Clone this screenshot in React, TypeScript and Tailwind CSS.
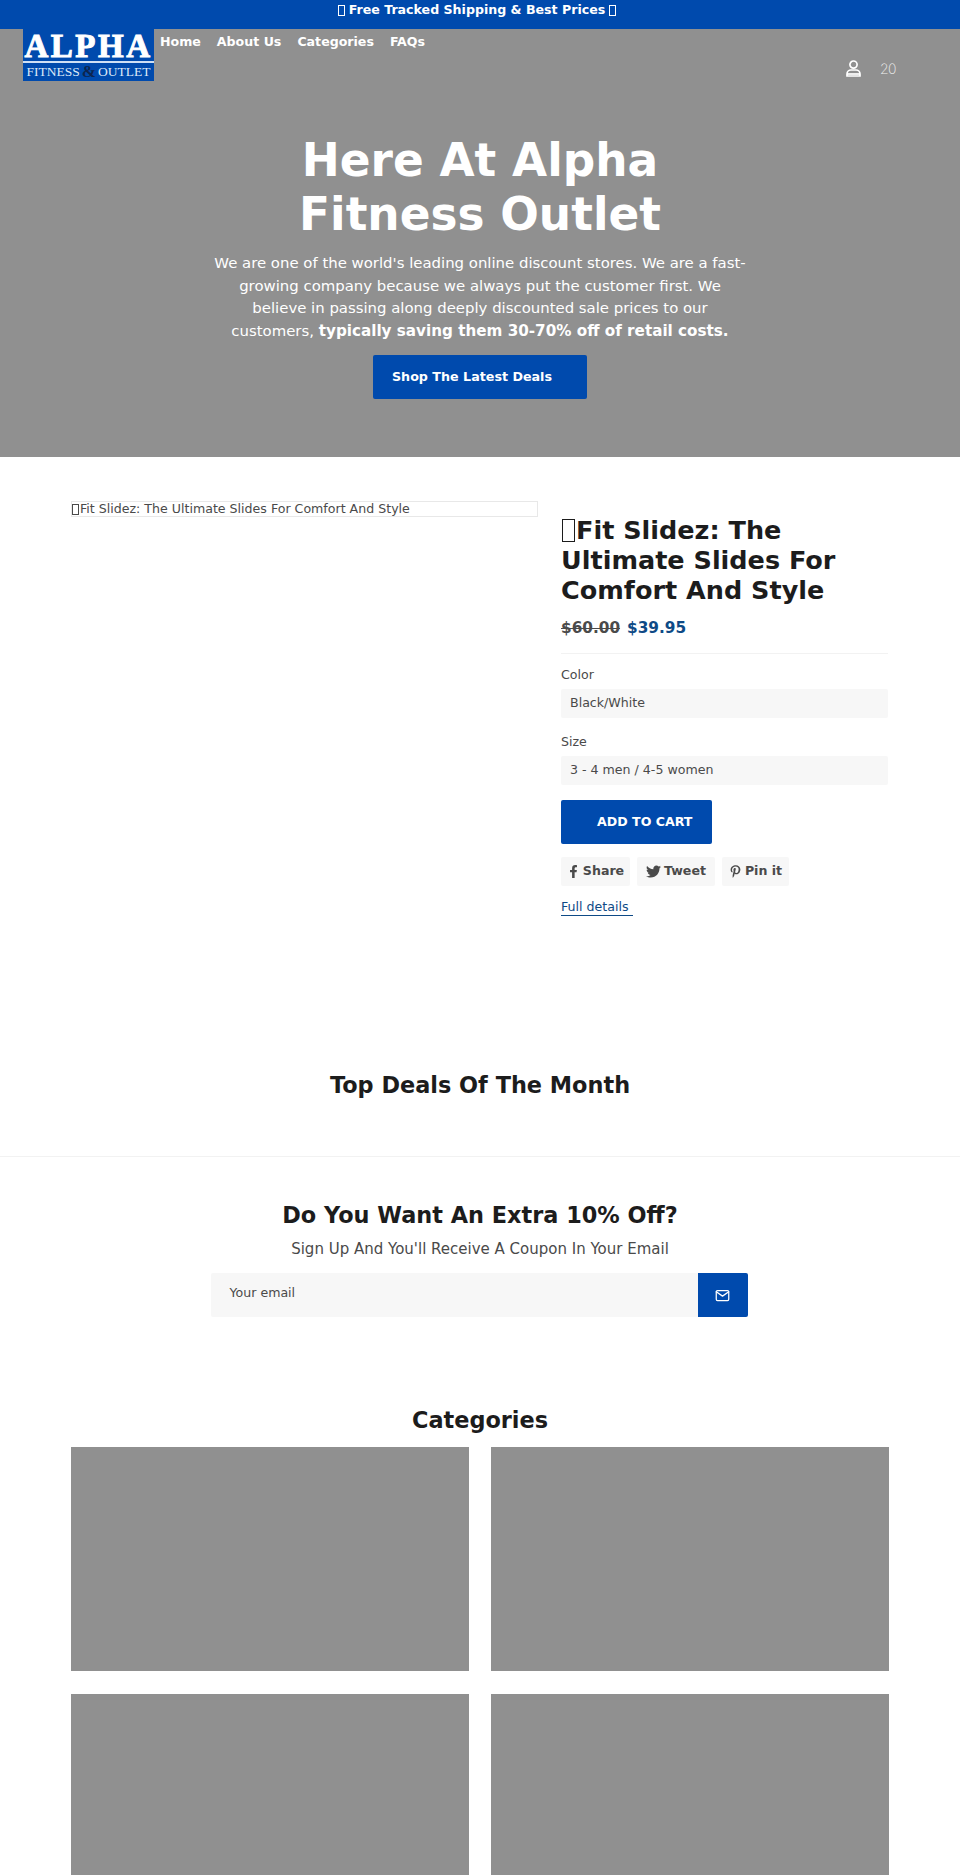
import { FaFacebookF, FaPinterestP, FaTwitter } from "react-icons/fa";
import { FiMail } from "react-icons/fi";

const font = "font-['DejaVu_Sans',sans-serif]";

// the source page's emoji shows as an empty box in the screenshot
function MissingGlyph({ className }: { className: string }) {
  return <span aria-hidden className={`inline-block border border-current align-[-0.12em] ${className}`} />;
}

function CategoryTile() {
  return <div className="h-[224px] bg-[#909090]" />;
}

function ShareButton({ icon, label, width }: { icon: React.ReactNode; label: string; width: string }) {
  return (
    <button className={`flex h-[29px] items-center justify-center gap-[3px] rounded-[2px] bg-[#f7f7f7] text-[12.6px] font-bold text-[#4a4a4a] ${width}`}>
      {icon}
      {label}
    </button>
  );
}

export default function App() {
  return (
    <div className={`${font} h-[1875px] overflow-hidden bg-white text-[#1c1c1c]`}>
      {/* announcement */}
      <div className="flex h-[29px] items-center justify-center gap-[4px] bg-[#004aad] pb-[9px] pr-[6px] text-[12.6px] font-bold text-white">
        <MissingGlyph className="h-[11px] w-[7px]" />
        <span>Free Tracked Shipping &amp; Best Prices</span>
        <MissingGlyph className="h-[11px] w-[7px]" />
      </div>

      {/* hero with header on top */}
      <section className="h-[428px] bg-[#909090] text-white">
        <header className="flex h-[64px] pl-[23px] pr-[64px]">
          <div className="flex h-[52px] w-[131px] flex-col items-center bg-[#004aad] font-['Liberation_Serif',serif] leading-none">
            <div className="h-[32px] text-[33px] font-bold leading-[34px] tracking-[2.5px] [-webkit-text-stroke:1px_white]">
              ALPHA
            </div>
            <div className="h-[2px] w-full bg-[#cfe0f5]" />
            <div className="mt-[1px] flex items-center gap-[2px] whitespace-nowrap text-[13.5px] leading-[15px] text-[#dce8f7]">
              FITNESS
              <span className="text-[17px] font-bold leading-[15px] text-[#0d2550]">&amp;</span>
              OUTLET
            </div>
          </div>
          <nav className="ml-[6px] flex gap-[16px] pt-[4px] text-[12.6px] font-bold leading-[18px]">
            <a>Home</a>
            <a>About Us</a>
            <a>Categories</a>
            <a>FAQs</a>
          </nav>
          <div className="ml-auto flex items-center gap-[19px] pt-[14px]">
            <svg width="15" height="17" viewBox="0 0 15 17" fill="none" stroke="white" strokeWidth="1.7">
              <circle cx="7.5" cy="4.6" r="3.6" />
              <path d="M1 14c0-2.600 2-4 4-4h5c2 0 4 1.400 4 4v2H1z" />
              <path d="M1 14h13" />
            </svg>
            <span className="font-['Inter',sans-serif] text-[14px] font-extralight tracking-[-0.5px] text-[#f0f0f0]">20</span>
          </div>
        </header>

        <div className="mx-auto flex w-[540px] flex-col items-center pt-[41px] text-center">
          <h1 className="text-[45.400px] font-bold leading-[54px]">
            Here At Alpha
            <br />
            Fitness Outlet
          </h1>
          <p className="mt-[10px] text-[14.900px] leading-[22.5px]">
            We are one of the world's leading online discount stores. We are a fast-growing company because we always
            put the customer first. We believe in passing along deeply discounted sale prices to our customers,{" "}
            <strong className="text-[15.200px]">typically saving them 30-70% off of retail costs.</strong>
          </p>
          <button className="mt-[13px] h-[44px] w-[214px] rounded-[2px] bg-[#004aad] pr-[16px] text-[12.7px] font-bold text-white">
            Shop The Latest Deals
          </button>
        </div>
      </section>

      {/* featured product */}
      <section className="flex gap-[23px] pl-[71px] pr-[72px] pt-[44px]">
        <div className="w-[467px]">
          <div className="flex h-[16px] items-center border border-[#e8e8e8] text-[12.6px] leading-[14px] text-[#4a4a4a]">
            <MissingGlyph className="mr-px h-[11px] w-[7px]" />
            Fit Slidez: The Ultimate Slides For Comfort And Style
          </div>
        </div>
        <div className="w-[327px] pt-[14px]">
          <h2 className="text-[25.500px] font-bold leading-[30px]">
            <MissingGlyph className="mx-[1px] h-[23px] w-[13px]" />
            Fit Slidez: The Ultimate Slides For Comfort And Style
          </h2>
          <div className="mt-[13px] flex gap-[7px] border-b border-[#f2f2f2] pb-[15px] text-[15.300px] font-bold leading-[20px]">
            <s className="text-[#4a4a4a]">$60.00</s>
            <span className="text-[#0e4a86]">$39.95</span>
          </div>
          <div className="mt-[12px] text-[12.6px] leading-[18px] text-[#4a4a4a]">Color</div>
          <div className="mt-[5px] flex h-[29px] items-center rounded-[2px] bg-[#f7f7f7] px-[9px] text-[12.6px] text-[#4a4a4a]">
            Black/White
          </div>
          <div className="mt-[15px] text-[12.6px] leading-[18px] text-[#4a4a4a]">Size</div>
          <div className="mt-[5px] flex h-[29px] items-center rounded-[2px] bg-[#f7f7f7] px-[9px] text-[12.6px] text-[#4a4a4a]">
            3 - 4 men / 4-5 women
          </div>
          <button className="mt-[15px] h-[44px] w-[151px] rounded-[2px] bg-[#004aad] pl-[36px] text-left text-[12.6px] font-bold text-white">
            ADD TO CART
          </button>
          <div className="mt-[13px] flex gap-[7px]">
            <ShareButton width="w-[69px]" icon={<FaFacebookF className="text-[13px]" />} label="Share" />
            <ShareButton width="w-[78px]" icon={<FaTwitter className="text-[15px]" />} label="Tweet" />
            <ShareButton width="w-[67px]" icon={<FaPinterestP className="text-[13px]" />} label="Pin it" />
          </div>
          <a className="mt-[13px] inline-block border-b border-[#0e4a86] text-[12.6px] leading-[16px] text-[#0e4a86]">
            Full details&nbsp;
          </a>
        </div>
      </section>

      {/* top deals */}
      <h2 className="mt-[152px] text-center text-[22.400px] font-bold leading-[30px]">Top Deals Of The Month</h2>
      <div className="mt-[56px] h-px bg-[#f2f2f2]" />

      {/* newsletter */}
      <section className="flex flex-col items-center pt-[43px]">
        <h2 className="text-[22.400px] font-bold leading-[30px]">Do You Want An Extra 10% Off?</h2>
        <p className="mt-[9px] text-[15px] leading-[20px] text-[#4a4a4a]">
          Sign Up And You'll Receive A Coupon In Your Email
        </p>
        <form className="mt-[14px] flex h-[44px] w-[537px] -translate-x-px">
          <div className="flex flex-1 items-center rounded-l-[2px] bg-[#f7f7f7] pb-[3px] pl-[19px] text-[12.6px] text-[#4a4a4a]">
            Your email
          </div>
          <button className="flex w-[50px] items-center justify-center rounded-r-[2px] bg-[#004aad] text-white">
            <FiMail className="text-[15px]" />
          </button>
        </form>
      </section>

      {/* categories */}
      <section className="px-[71px] pt-[88px]">
        <h2 className="text-center text-[22.400px] font-bold leading-[30px]">Categories</h2>
        <div className="mt-[12px] grid grid-cols-2 gap-x-[22px] gap-y-[23px]">
          <CategoryTile />
          <CategoryTile />
          <CategoryTile />
          <CategoryTile />
        </div>
      </section>
    </div>
  );
}
